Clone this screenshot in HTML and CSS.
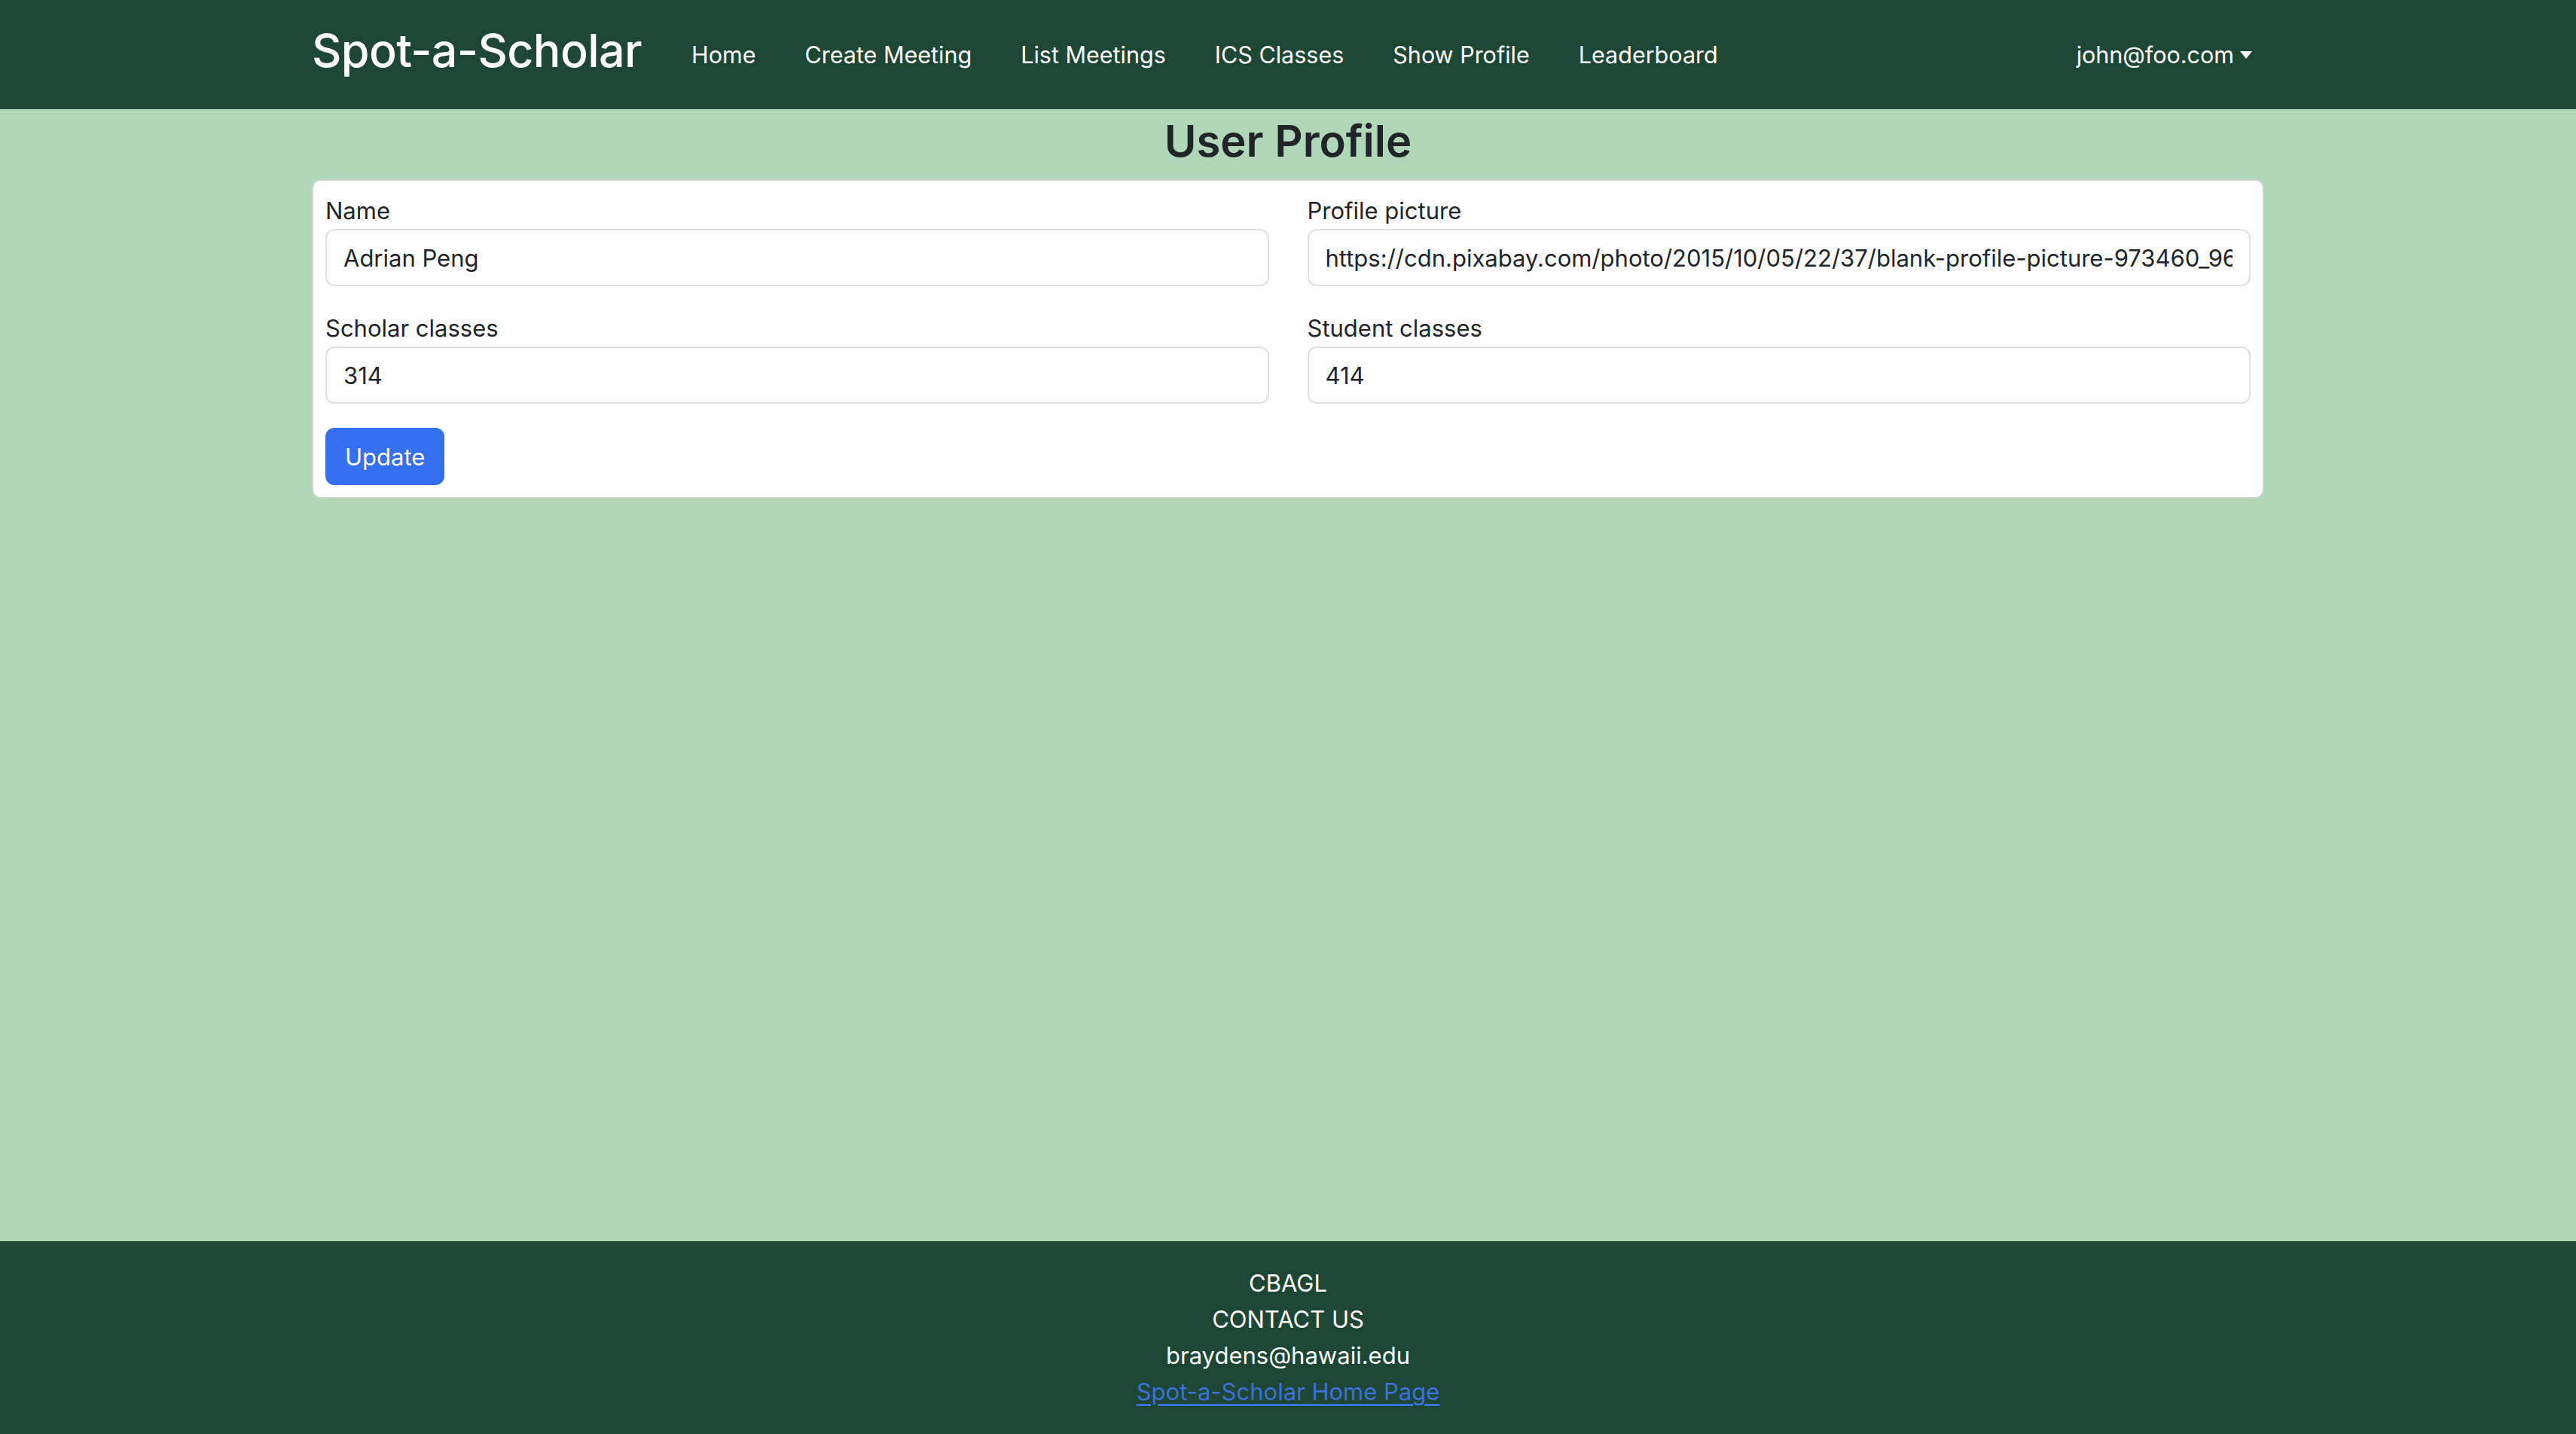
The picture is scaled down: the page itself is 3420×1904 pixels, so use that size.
FILE: index.html
```html
<!DOCTYPE html>
<html lang="en">
<head>
<meta charset="utf-8">
<title>Spot-a-Scholar</title>
<link rel="stylesheet" href="styles.css">
</head>
<body>
<nav class="navbar">
  <div class="container nav-inner">
    <a class="brand" href="#">Spot-a-Scholar</a>
    <ul class="nav-links">
      <li><a class="nav-link" href="#">Home</a></li>
      <li><a class="nav-link" href="#">Create Meeting</a></li>
      <li><a class="nav-link" href="#">List Meetings</a></li>
      <li><a class="nav-link" href="#">ICS Classes</a></li>
      <li><a class="nav-link" href="#">Show Profile</a></li>
      <li><a class="nav-link" href="#">Leaderboard</a></li>
    </ul>
    <a class="nav-link dropdown-toggle" href="#">john@foo.com</a>
  </div>
</nav>
<main class="main">
  <div class="container">
    <h2 class="page-title">User Profile</h2>
    <div class="card">
      <form class="profile-form">
        <div class="field">
          <label class="field-label">Name</label>
          <input class="field-input" type="text" value="Adrian Peng">
        </div>
        <div class="field">
          <label class="field-label">Profile picture</label>
          <input class="field-input" type="text" value="https://cdn.pixabay.com/photo/2015/10/05/22/37/blank-profile-picture-973460_960_720.png">
        </div>
        <div class="field">
          <label class="field-label">Scholar classes</label>
          <input class="field-input" type="text" value="314">
        </div>
        <div class="field">
          <label class="field-label">Student classes</label>
          <input class="field-input" type="text" value="414">
        </div>
        <div class="actions">
          <button class="btn-primary" type="button">Update</button>
        </div>
      </form>
    </div>
  </div>
</main>
<footer class="footer">
  <div>CBAGL</div>
  <div>CONTACT US</div>
  <div>braydens@hawaii.edu</div>
  <div><a class="footer-link" href="#">Spot-a-Scholar Home Page</a></div>
</footer>
</body>
</html>
```
FILE: styles.css
```css
* { box-sizing: border-box; }
html, body { margin: 0; padding: 0; }
body {
  font-family: Inter, "Noto Sans", sans-serif;
  font-size: 32px;
  line-height: 48px;
  color: #212529;
  min-height: 100vh;
  display: flex;
  flex-direction: column;
  background: #b0d8b8;
}
.container {
  width: 2640px;
  margin: 0 auto;
  padding: 0 24px;
}
.navbar {
  background: #1d4634;
  height: 145px;
  flex: none;
}
.nav-inner {
  display: flex;
  align-items: center;
  height: 100%;
}
.brand {
  color: #fff;
  text-decoration: none;
  font-size: 61px;
  font-weight: 500;
  line-height: 90px;
  padding-bottom: 12px;
  margin-right: 50px;
  letter-spacing: -0.6px;
}
.nav-links {
  list-style: none;
  margin: 0;
  padding: 0;
  display: flex;
  gap: 33px;
}
.nav-link {
  color: #fff;
  text-decoration: none;
  padding: 16px;
  font-size: 30.5px;
  display: block;
}
.dropdown-toggle {
  margin-left: auto;
  display: flex;
  align-items: center;
}
.dropdown-toggle::after {
  content: "";
  display: inline-block;
  margin-left: 8px;
  border-top: 10px solid #fff;
  border-left: 8px solid transparent;
  border-right: 8px solid transparent;
}
.main {
  flex: 1;
  background: #b0d8b8;
}
.page-title {
  margin: 0;
  text-align: center;
  font-size: 58px;
  line-height: 84px;
  font-weight: 600;
  padding-top: 0;
  padding-bottom: 9px;
  color: #212529;
}
.card {
  background: #fff;
  border: 2px solid #cfd6d0;
  border-radius: 12px;
  padding: 16px 16px 16px 16px;
}
.profile-form {
  display: grid;
  grid-template-columns: 1fr 1fr;
  column-gap: 51px;
}
.field {
  margin-bottom: 32px;
  min-width: 0;
}
.field-label {
  display: block;
  font-size: 31px;
  line-height: 48px;
}
.field-input {
  display: block;
  width: 100%;
  height: 76px;
  border: 2px solid #dee2e6;
  border-radius: 12px;
  padding: 0 22px;
  font-family: inherit;
  font-size: 31px;
  color: #212529;
  background: #fff;
  outline: none;
}
.actions {
  grid-column: 1 / -1;
}
.btn-primary {
  height: 76px;
  padding: 0 24px;
  font-family: inherit;
  font-size: 31px;
  color: #fff;
  background: #336ff0;
  border: 2px solid #336ff0;
  border-radius: 12px;
}
.footer {
  flex: none;
  background: #1d4634;
  color: #fff;
  text-align: center;
  padding: 32px 0;
  font-size: 31px;
  line-height: 48px;
}
.footer-link {
  color: #3a72dc;
  text-decoration: underline;
  text-underline-offset: 5px;
}
```
